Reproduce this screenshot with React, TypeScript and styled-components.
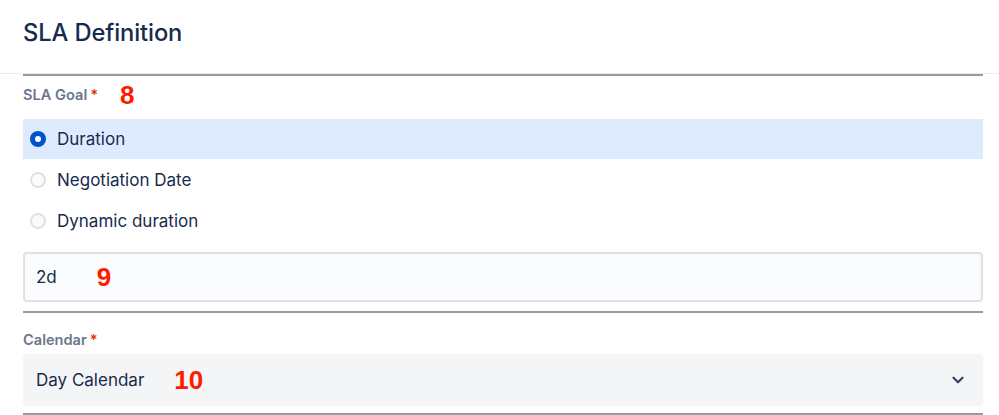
import styled, { createGlobalStyle } from "styled-components";

const GlobalStyle = createGlobalStyle`
    html, body {
        margin: 0;
        padding: 0;
        background: #ffffff;
        font-family: Inter, "Noto Sans", "Liberation Sans", sans-serif;
        color: #172b4d;
    }
`;

const Page = styled.div`
    width: 999px;
    height: 415px;
    overflow: hidden;
    background: #ffffff;
`;

const Header = styled.header`
    height: 73px;
    padding: 0 23px;
    display: flex;
    align-items: center;
    border-bottom: 1px solid #ebecf0;

    h1 {
        margin: 0 0 8px;
        font-size: 23.7px;
        font-weight: 500;
        color: #172b4d;
        letter-spacing: -0.1px;
    }
`;

const Body = styled.div`
    padding: 0 16px 0 23px;
`;

const Divider = styled.div`
    height: 2px;
    background: #9a9a9a;
`;

const Section = styled.div<{ $top: number }>`
    padding-top: ${(p) => p.$top}px;
`;

const Label = styled.div`
    display: flex;
    align-items: center;
    height: 22px;
    font-size: 14.6px;
    font-weight: 600;
    color: #6b778c;

    span.req {
        color: #de350b;
        margin-left: 3px;
    }
`;

const Marker = styled.span<{ $gap: number }>`
    margin-left: ${(p) => p.$gap}px;
    font-family: "Liberation Sans", Arial, sans-serif;
    font-weight: 700;
    font-size: 26px;
    color: #ff1a00;
`;

const RadioList = styled.div`
    margin-top: 13px;
    display: flex;
    flex-direction: column;
`;

const RadioRow = styled.label<{ $checked?: boolean }>`
    display: flex;
    align-items: center;
    height: 40px;
    padding-left: 7px;
    gap: 11px;
    font-size: 17px;
    color: #172b4d;
    background: ${(p) => (p.$checked ? "#deebff" : "transparent")};
    & + & {
        margin-top: 1px;
    }
`;

const RadioDot = styled.span<{ $checked?: boolean }>`
    box-sizing: border-box;
    width: 16px;
    height: 16px;
    border-radius: 50%;
    display: flex;
    align-items: center;
    justify-content: center;
    background: ${(p) => (p.$checked ? "#0052cc" : "#fafbfc")};
    border: ${(p) => (p.$checked ? "none" : "2px solid #dfe1e6")};

    &::after {
        content: "";
        display: ${(p) => (p.$checked ? "block" : "none")};
        width: 6px;
        height: 6px;
        border-radius: 50%;
        background: #ffffff;
    }
`;

const TextField = styled.div`
    box-sizing: border-box;
    margin: 11px 0 9px;
    height: 50px;
    display: flex;
    align-items: center;
    padding-left: 11px;
    background: #fafbfc;
    border: 2px solid #dfe1e6;
    border-radius: 4px;
    font-size: 17px;
    color: #172b4d;
`;

const Select = styled.div`
    box-sizing: border-box;
    margin: 3px 0 7px;
    height: 52px;
    display: flex;
    align-items: center;
    padding: 0 16px 0 13px;
    background: #f4f5f7;
    border-radius: 4px;
    font-size: 17px;
    color: #172b4d;
`;

const SelectValue = styled.div`
    flex: 1;
    display: flex;
    align-items: center;
`;

const Chevron = () => (
    <svg width="18" height="18" viewBox="0 0 24 24">
        <path d="M6 9l6 6 6-6" fill="none" stroke="#344563" strokeWidth="3" strokeLinecap="round" strokeLinejoin="round" />
    </svg>
);

const options = ["Duration", "Negotiation Date", "Dynamic duration"];

export default function App() {
    const selected = "Duration";

    return (
        <Page>
            <GlobalStyle />
            <Header>
                <h1>SLA Definition</h1>
            </Header>
            <Body>
                <Divider />
                <Section $top={8}>
                    <Label>
                        SLA Goal<span className="req">*</span>
                        <Marker $gap={22}>8</Marker>
                    </Label>
                    <RadioList>
                        {options.map((o) => (
                            <RadioRow key={o} $checked={o === selected}>
                                <RadioDot $checked={o === selected} />
                                {o}
                            </RadioRow>
                        ))}
                    </RadioList>
                    <TextField>
                        2d
                        <Marker $gap={40}>9</Marker>
                    </TextField>
                </Section>
                <Divider />
                <Section $top={16}>
                    <Label>
                        Calendar<span className="req">*</span>
                    </Label>
                    <Select>
                        <SelectValue>
                            Day Calendar
                            <Marker $gap={30}>10</Marker>
                        </SelectValue>
                        <Chevron />
                    </Select>
                </Section>
                <Divider />
            </Body>
        </Page>
    );
}
